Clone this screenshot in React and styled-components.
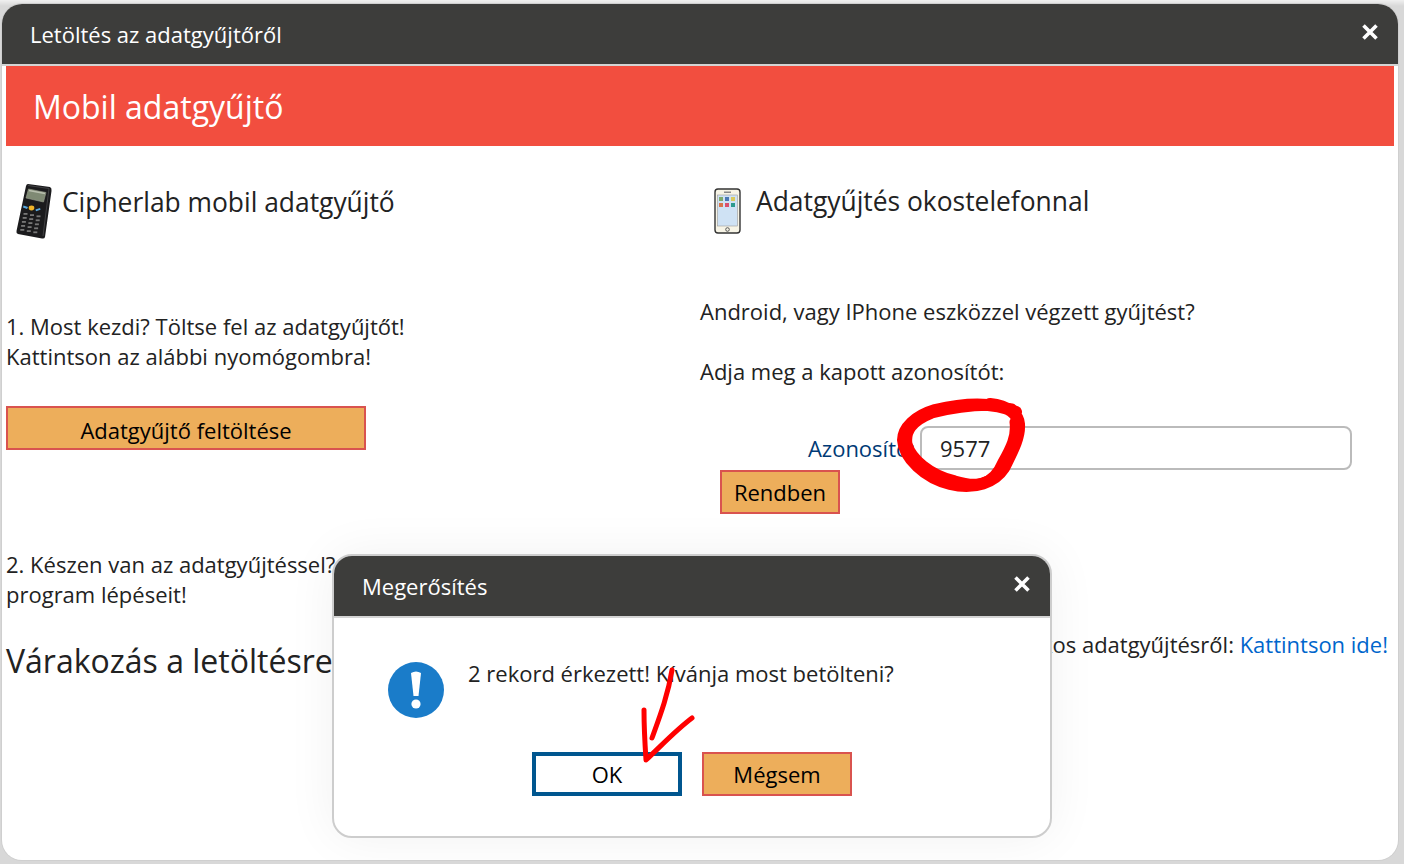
import React from 'react'
import styled, { createGlobalStyle } from 'styled-components'

const Global = createGlobalStyle`
    html, body {
        margin: 0;
        padding: 0;
        height: 864px;
        overflow: hidden;
        background: #dcdcdc;
        font-family: "Open Sans", "Liberation Sans", sans-serif;
    }
`

const Page = styled.div`
    position: relative;
    width: 1404px;
    height: 864px;
    padding: 4px 6px 4px 2px;
    box-sizing: border-box;
    background: linear-gradient(#f0f0f0, #d8d8d8 6px);
`

const Window = styled.div`
    position: relative;
    height: 856px;
    background: #fff;
    border-radius: 20px;
    overflow: hidden;
    box-shadow: 0 0 0 1px #cfcfcf;
`

const TitleBar = styled.div`
    height: 60px;
    padding: 0 28px;
    display: flex;
    align-items: center;
    justify-content: space-between;
    background: #3d3d3b;
    border-bottom: 2px solid #d4d4d4;
    color: #fff;
    font-size: 22px;
`

const Close = styled.span`
    display: flex;
    width: 20px;
    height: 20px;
    margin-right: -10px;
    margin-top: -5px;
`

const Content = styled.div`
    padding: 0 4px;
`

const Banner = styled.div`
    height: 80px;
    padding-left: 27px;
    display: flex;
    align-items: center;
    background: #f24e3f;
    color: #fff;
    font-size: 32px;
`

const Columns = styled.div`
    display: grid;
    grid-template-columns: 694px 694px;
`

const Column = styled.div`
    display: flex;
    flex-direction: column;
    align-items: flex-start;
    color: #222;
    font-size: 22px;
    line-height: 30px;
`

const Heading = styled.div`
    display: flex;
    align-items: flex-start;
    gap: ${({ $gap }) => $gap}px;
    margin: ${({ $top }) => $top}px 0 0 ${({ $left }) => $left}px;
    font-size: 26.4px;
    line-height: 30px;
    color: #222;
`

const HeadingText = styled.span`
    margin-top: ${({ $top }) => $top || 0}px;
`

const Para = styled.p`
    margin: ${({ $top }) => $top}px 0 0;
    white-space: nowrap;
`

const ActionButton = styled.button`
    box-sizing: border-box;
    width: ${({ $w }) => $w}px;
    height: 44px;
    margin: ${({ $top }) => $top || 0}px 0 0 ${({ $left }) => $left || 0}px;
    padding: ${({ $pad }) => $pad ?? 0}px 0 0;
    background: #edae5b;
    border: 2px solid #d9534f;
    color: #000;
    font: 22px/30px "Open Sans", sans-serif;
`

const Waiting = styled.div`
    margin-top: 32px;
    font-size: 32px;
    line-height: 40px;
    white-space: nowrap;
`

const FormRow = styled.div`
    display: flex;
    align-items: center;
    gap: 5px;
    margin-top: 40px;
`

const Label = styled.label`
    width: 215px;
    text-align: right;
    color: #003a75;
    white-space: nowrap;
`

const Input = styled.div`
    box-sizing: border-box;
    width: 432px;
    height: 44px;
    padding-left: 18px;
    display: flex;
    align-items: center;
    border: 2px solid #bbb;
    border-radius: 8px;
    color: #222;
`

const LinkLine = styled.p`
    align-self: flex-end;
    margin: 115px 6px 0 0;
    white-space: nowrap;
`

const Link = styled.a`
    color: #0066cc;
    text-decoration: none;
`

const Dialog = styled.div`
    position: absolute;
    left: 330px;
    top: 550px;
    width: 720px;
    height: 284px;
    box-sizing: border-box;
    background: #fff;
    border: 2px solid #cdcdcd;
    border-radius: 20px;
    overflow: hidden;
    box-shadow: 0 0 50px rgba(0, 0, 0, 0.06);
`

const DialogBody = styled.div`
    display: flex;
    gap: 23px;
    padding: 40px 0 0 53px;
    color: #222;
    font-size: 22px;
    line-height: 30px;
`

const DialogIcon = styled.svg`
    flex: none;
    margin-top: 3px;
`

const DialogButtons = styled.div`
    display: flex;
    gap: 20px;
    margin: 33px 0 0 198px;
`

const OkButton = styled(ActionButton)`
    background: #fff;
    border: 4px solid #00568f;
`

const Scribble = styled.svg`
    position: absolute;
    left: 0;
    top: 0;
    pointer-events: none;
`

const Device = () => (
    <svg width="36" height="55" viewBox="0 0 36 55" style={{ flex: 'none' }}>
        <path d="M12 0 L34 3 Q36 4 35.5 7 L29 53 Q28.5 55 26 54.5 L2 50 Q0 49.5 0.5 47 L10 2 Q10.5 0 12 0Z" fill="#1b1b1d" />
        <path d="M12 1.5 L33 4.5 L27 52" fill="none" stroke="#4a4a4c" strokeWidth="0.8" />
        <path d="M12.5 5 L30 8.5 L27.5 18 L10 14Z" fill="#7f8a74" stroke="#9aa08f" strokeWidth="0.6" />
        <path d="M13 6.5 L29 9.5" stroke="#b8bfae" strokeWidth="1.4" />
        <ellipse cx="15.5" cy="24" rx="2.8" ry="2.4" fill="#f0b428" />
        <path d="M7.5 21.5 L12 23 L11 25 L7 23.5Z" fill="#59a9e0" />
        <path d="M19.5 25.5 L24 24 L24.5 25.8 L20 27.2Z" fill="#59a9e0" />
        <g fill="#777">
            {[0, 1, 2, 3, 4].map(r => [0, 1, 2].map(c => (
                <rect key={`${r}-${c}`} x={7.5 + c * 6.5 - r * 0.8} y={29 + r * 4 + c * 1.2} width="4" height="1.8" />
            )))}
        </g>
    </svg>
)

const Phone = () => (
    <svg width="28" height="47" viewBox="0 0 28 47" style={{ flex: 'none', marginTop: 2 }}>
        <rect x="1" y="1" width="25" height="44" rx="3" fill="#f7f4e6" stroke="#333" strokeWidth="1.4" />
        <rect x="3.5" y="7" width="20" height="31" fill="#cfe2f4" stroke="#999" strokeWidth="0.6" />
        <rect x="10" y="3.5" width="7" height="1.5" fill="#888" />
        <circle cx="13.5" cy="41.5" r="1.8" fill="none" stroke="#555" />
        <rect x="5" y="9" width="4" height="4" fill="#7eaa6c" />
        <rect x="11" y="9" width="4" height="4" fill="#4a78b5" />
        <rect x="17" y="9" width="4" height="4" fill="#d9c95b" />
        <rect x="5" y="15" width="4" height="4" fill="#d9744a" />
        <rect x="11" y="15" width="4" height="4" fill="#d9506e" />
        <rect x="17" y="15" width="4" height="4" fill="#2c9a8e" />
    </svg>
)

const CloseIcon = () => (
    <Close>
        <svg width="20" height="20" viewBox="0 0 20 20">
            <path d="M3.5 3.5 L16.5 16.5 M16.5 3.5 L3.5 16.5" stroke="#fff" strokeWidth="3.6" />
        </svg>
    </Close>
)

const InfoIcon = () => (
    <DialogIcon width="58" height="58" viewBox="0 0 58 58">
        <circle cx="29" cy="29" r="28" fill="#1a7cc9" />
        <path d="M24 12 Q29 9 34 12 L31.5 35 H26.5Z" fill="#fff" />
        <circle cx="29" cy="43" r="4.6" fill="#fff" />
    </DialogIcon>
)

const App = () => {
    return (
        <Page>
            <Global />
            <Window>
                <TitleBar>
                    Letöltés az adatgyűjtőről
                    <CloseIcon />
                </TitleBar>
                <Content>
                    <Banner>Mobil adatgyűjtő</Banner>
                    <Columns>
                        <Column>
                            <Heading $top={38} $left={10} $gap={10}>
                                <Device />
                                <HeadingText $top={3}>Cipherlab mobil adatgyűjtő</HeadingText>
                            </Heading>
                            <Para $top={72}>
                                1. Most kezdi? Töltse fel az adatgyűjtőt!<br />
                                Kattintson az alábbi nyomógombra!
                            </Para>
                            <ActionButton $w={360} $top={35} $pad={4}>Adatgyűjtő feltöltése</ActionButton>
                            <Para $top={99}>
                                2. Készen van az adatgyűjtéssel?<br />
                                program lépéseit!
                            </Para>
                            <Waiting>Várakozás a letöltésre</Waiting>
                        </Column>
                        <Column>
                            <Heading $top={40} $left={14} $gap={14}>
                                <Phone />
                                <HeadingText>Adatgyűjtés okostelefonnal</HeadingText>
                            </Heading>
                            <Para $top={61}>Android, vagy IPhone eszközzel végzett gyűjtést?</Para>
                            <Para $top={30}>Adja meg a kapott azonosítót:</Para>
                            <FormRow>
                                <Label>Azonosító:</Label>
                                <Input>9577</Input>
                            </FormRow>
                            <ActionButton $w={120} $left={20}>Rendben</ActionButton>
                            <LinkLine>
                                Bővebben az okos adatgyűjtésről: <Link>Kattintson ide!</Link>
                            </LinkLine>
                        </Column>
                    </Columns>
                </Content>
                <Dialog>
                    <TitleBar>
                        Megerősítés
                        <CloseIcon />
                    </TitleBar>
                    <DialogBody>
                        <InfoIcon />
                        <span>2 rekord érkezett! Kívánja most betölteni?</span>
                    </DialogBody>
                    <DialogButtons>
                        <OkButton $w={150}>OK</OkButton>
                        <ActionButton $w={150}>Mégsem</ActionButton>
                    </DialogButtons>
                </Dialog>
            </Window>
            <Scribble width="1404" height="864" viewBox="0 0 1404 864" fill="none" stroke="#ff0000" strokeLinecap="round" strokeLinejoin="round">
                <path d="M1016 412 C990 400 960 404 935 410 C915 416 903 428 903 440 C904 458 925 478 950 484 C975 490 995 482 1004 468 C1012 452 1020 438 1019 424 C1018 414 1008 406 990 404" strokeWidth="12" />
                <path d="M1012 408 C985 404 955 408 932 414 C912 422 906 432 908 444 C912 458 930 474 955 480 C975 486 992 486 1002 462 C1010 448 1016 436 1014 422" strokeWidth="9" />
                <path d="M672 670 C668 695 660 716 652 738" strokeWidth="5" />
                <path d="M644 710 C644 728 645 745 646 760 C662 745 676 730 692 718" strokeWidth="5" />
            </Scribble>
        </Page>
    )
}

export default App
